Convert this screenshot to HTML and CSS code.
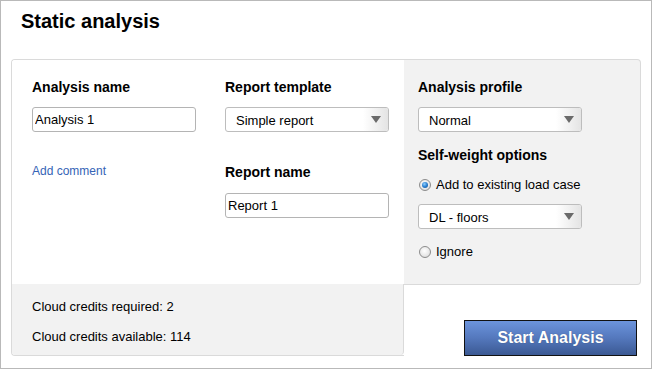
FILE: index.html
```html
<!DOCTYPE html>
<html>
<head>
<meta charset="utf-8">
<link rel="stylesheet" href="styles.css">
</head>
<body>
<div class="frame">
  <h1 class="title">Static analysis</h1>
  <div class="card">
    <div class="main-col">
      <div class="form-area">
        <div class="field-col">
          <div class="label">Analysis name</div>
          <input class="text-input gap-12" type="text" value="Analysis 1">
          <a class="link" href="#">Add comment</a>
        </div>
        <div class="field-col">
          <div class="label">Report template</div>
          <div class="select gap-12"><span class="select-text">Simple report</span><span class="select-arrow"></span></div>
          <div class="label gap-32">Report name</div>
          <input class="text-input gap-13" type="text" value="Report 1">
        </div>
      </div>
      <div class="footer">
        <div class="credit">Cloud credits required: 2</div>
        <div class="credit">Cloud credits available: 114</div>
      </div>
    </div>
    <div class="side-col">
      <div class="panel">
        <div class="label">Analysis profile</div>
        <div class="select gap-12"><span class="select-text">Normal</span><span class="select-arrow"></span></div>
        <div class="label gap-15">Self-weight options</div>
        <div class="radio-row gap-14"><span class="radio checked"></span><span>Add to existing load case</span></div>
        <div class="select gap-12"><span class="select-text">DL - floors</span><span class="select-arrow"></span></div>
        <div class="radio-row gap-15"><span class="radio"></span><span>Ignore</span></div>
      </div>
      <button class="start" type="button">Start Analysis</button>
    </div>
  </div>
</div>
</body>
</html>
```

FILE: styles.css
```css
* { box-sizing: border-box; }

html, body {
  margin: 0;
  padding: 0;
  background: #fff;
}

body {
  font-family: "Liberation Sans", Arial, sans-serif;
  font-size: 13px;
  color: #000;
}

.frame {
  width: 652px;
  height: 369px;
  border: 1px solid #b9b9b9;
  padding: 8px 10px 0 10px;
}

.title {
  margin: 0;
  padding-left: 10px;
  font-size: 20px;
  line-height: 24px;
  font-weight: bold;
}

.card {
  margin-top: 26px;
  display: flex;
  align-items: stretch;
  width: 630px;
  height: 297px;
}

.main-col {
  width: 393px;
  display: flex;
  flex-direction: column;
  border: 1px solid #dadada;
  border-right: none;
  border-radius: 4px 0 0 4px;
  overflow: hidden;
}

.form-area {
  height: 224px;
  flex: none;
  padding: 19px 0 0 20px;
  display: grid;
  grid-template-columns: 164px 164px;
  column-gap: 29px;
  align-content: start;
  background: #fff;
}

.field-col {
  display: flex;
  flex-direction: column;
  align-items: flex-start;
}

.label {
  font-size: 14px;
  line-height: 16px;
  font-weight: bold;
  color: #000;
}

.gap-12 { margin-top: 12px; }
.gap-13 { margin-top: 13px; }
.gap-14 { margin-top: 14px; }
.gap-15 { margin-top: 15px; }
.gap-32 { margin-top: 32px; }

.text-input {
  width: 164px;
  height: 25px;
  border: 1px solid #b4b4b4;
  border-radius: 3px;
  padding: 0 2px;
  font-family: "Liberation Sans", Arial, sans-serif;
  font-size: 13px;
  color: #000;
  background: #fff;
  outline: none;
}

.link {
  margin-top: 32px;
  font-size: 12px;
  line-height: 14px;
  color: #3563b6;
  text-decoration: none;
}

.footer {
  flex: 1;
  background: #f2f2f2;
  border-right: 1px solid #dadada;
  border-bottom-right-radius: 4px;
  padding: 15px 0 0 20px;
  display: flex;
  flex-direction: column;
  gap: 15px;
}

.credit {
  line-height: 15px;
  font-size: 13px;
}

.side-col {
  width: 237px;
  display: flex;
  flex-direction: column;
  align-items: flex-end;
  justify-content: space-between;
}

.panel {
  width: 237px;
  height: 226px;
  background: #f2f2f2;
  border: 1px solid #dadada;
  border-left: none;
  border-radius: 0 4px 4px 0;
  padding: 19px 0 0 14px;
  display: flex;
  flex-direction: column;
  align-items: flex-start;
}

.select {
  width: 164px;
  height: 25px;
  border: 1px solid #bdbdbd;
  border-radius: 3px;
  background: #fff;
  display: flex;
  align-items: stretch;
  overflow: hidden;
}

.select-text {
  flex: 1;
  display: flex;
  align-items: center;
  padding: 1px 0 0 10px;
  font-size: 13px;
}

.select-arrow {
  width: 25px;
  display: flex;
  align-items: center;
  justify-content: center;
  background: linear-gradient(to right, #ffffff, #e4e4e4);
}

.select-arrow::before {
  content: "";
  width: 0;
  height: 0;
  border-left: 5px solid transparent;
  border-right: 5px solid transparent;
  border-top: 7px solid #6a6a6a;
}

.radio-row {
  display: flex;
  align-items: center;
  height: 15px;
  line-height: 15px;
  font-size: 13px;
}

.radio {
  width: 12px;
  height: 12px;
  margin: 0 5px 0 1px;
  border-radius: 50%;
  border: 1px solid #8c8c8c;
  background: radial-gradient(circle at 45% 40%, #ffffff 0%, #e9e9e9 55%, #cfcfcf 100%);
  display: flex;
  align-items: center;
  justify-content: center;
}

.radio.checked::after {
  content: "";
  width: 6px;
  height: 6px;
  border-radius: 50%;
  background: radial-gradient(circle at 40% 35%, #8fd0ff 0%, #2a7fd0 50%, #124a8a 100%);
}

.start {
  width: 173px;
  height: 36px;
  margin-right: 4px;
  border: 1px solid #111;
  border-radius: 0;
  background: linear-gradient(to bottom, #6c94dc 0%, #5478bd 50%, #3b5993 100%);
  color: #fff;
  font-family: "Liberation Sans", Arial, sans-serif;
  font-size: 16px;
  font-weight: bold;
  padding: 0;
  text-shadow: 0 0 1px rgba(0, 0, 0, 0.35);
}
```
